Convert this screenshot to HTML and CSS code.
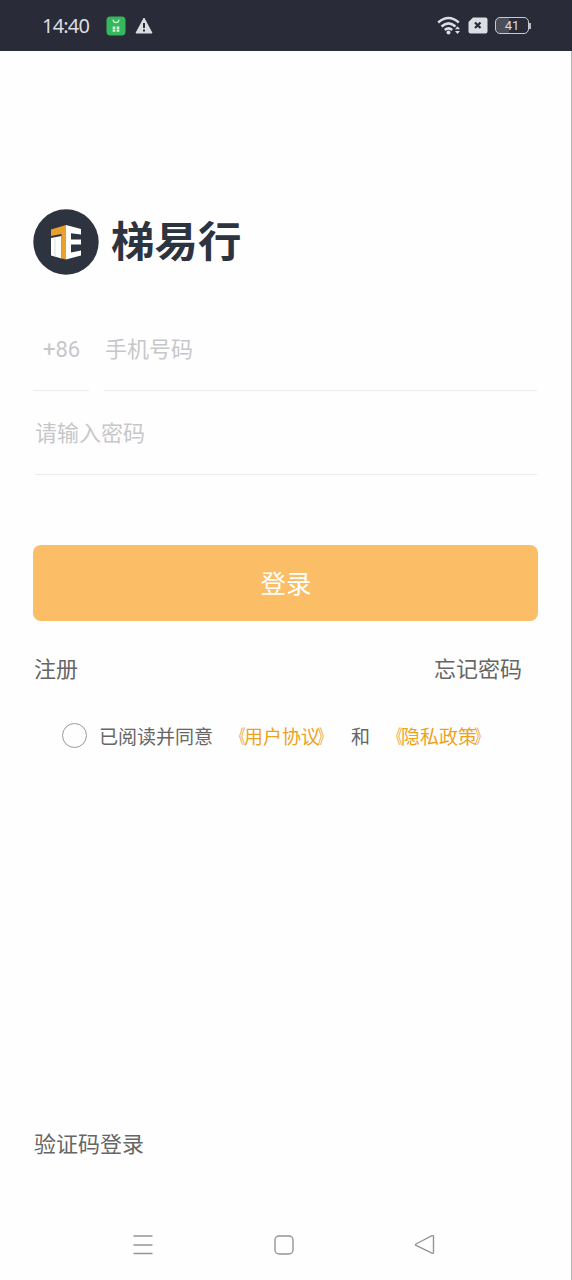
FILE: index.html
```html
<!DOCTYPE html>
<html lang="zh-CN">
<head>
<meta charset="utf-8">
<title>梯易行</title>
<link rel="stylesheet" href="styles.css">
</head>
<body>
<header class="status">
  <span class="clock">14:40</span>
  <svg class="app" width="20" height="20" viewBox="0 0 20 20"><rect x=".5" y=".5" width="19" height="19" rx="4" fill="#35b85c"/><path d="M7 3.700c.5 4 5.500 4 6 0" fill="none" stroke="#c9f3d4" stroke-width="1.300"/><path d="M8 10.500v5.500M12 10.500v5.500" fill="none" stroke="#d8f7df" stroke-width="2.600" stroke-dasharray="2.400 .5"/></svg>
  <svg class="warn" width="18" height="17" viewBox="0 0 18 17"><path d="M9 1 17 16H1Z" fill="#dcdcdf" stroke="#dcdcdf" stroke-linejoin="round"/><path d="M9 6v5M9 12.500v2" stroke="#2a2b38" stroke-width="2"/></svg>
  <div class="signals">
    <svg width="25" height="20" viewBox="0 0 25 20"><g fill="none" stroke="#dcdee3" stroke-width="2.500"><path d="M1.200 6.500Q11.500-2.500 21.800 6.500M4.500 10.500Q11.500 4.200 18.500 10.500M7.800 14Q11.500 10.700 15.200 14"/></g><circle cx="11.500" cy="16.500" r="2" fill="#dcdee3"/><path d="m18 13.200 2.500-3 2.500 3zM18 15h5l-2.500 3z" fill="#dcdee3"/></svg>
    <svg width="20" height="17" viewBox="0 0 20 17"><path d="M5 .5h12.500a2 2 0 0 1 2 2v12a2 2 0 0 1-2 2h-15a2 2 0 0 1-2-2V5Z" fill="#dcdee3"/><path d="m7 5.500 5.500 5.500m0-5.500L7 11" stroke="#2a2b38" stroke-width="2.200"/></svg>
    <span class="battery"><span class="level">41</span></span>
  </div>
</header>
<main class="page">
  <div class="brand">
    <svg width="66" height="66" viewBox="0 0 66 66"><circle cx="33" cy="33" r="32.700" fill="#2e3340"/><path d="M18 29 28.500 27V49.500L18 46.500Z" fill="#fff"/><path d="M22 28.500V47.500" stroke="#c5c7cd" stroke-width=".6"/><path d="M18 20.500 33 16V50.500L28.500 49.500V25L18 27Z" fill="#eaa02c"/><path d="M33 16 48 20V25.500L38 24.300V30.500H48V35.500H38V43.500L48 41.500V46.500L33 50.500Z" fill="#fff"/></svg>
    <h1 class="name">梯易行</h1>
  </div>
  <form class="form">
    <div class="phone"><span class="field code">+86</span><span class="field number">手机号码</span></div>
    <div class="field password">请输入密码</div>
    <button class="login" type="button">登录</button>
  </form>
  <div class="links"><span>注册</span><span>忘记密码</span></div>
  <div class="agree"><i class="radio"></i><span class="read">已阅读并同意</span><span class="policy"><span class="open">《</span>用户协议<span class="close">》</span></span><span class="and">和</span><span class="policy"><span class="open">《</span>隐私政策<span class="close">》</span></span></div>
  <div class="sms">验证码登录</div>
</main>
<nav class="nav">
  <svg width="22" height="22" viewBox="0 0 22 22"><path d="M1.500 2h19M1.500 11h19M1.500 19.500h19"/></svg>
  <svg width="22" height="22" viewBox="0 0 22 22"><rect x="2" y="2" width="18" height="18" rx="4"/></svg>
  <svg width="22" height="22" viewBox="0 0 22 22"><path d="M2 10 18 1.700Q19.500 1.200 19.500 2.700V18.300Q19.500 19.800 18 19.200L2 11.500Q1 10.800 2 10Z"/></svg>
</nav>
</body>
</html>
```
FILE: styles.css
```css
* { box-sizing: border-box; }
body {
  margin: 0;
  height: 1280px;
  display: flex;
  flex-direction: column;
  overflow: hidden;
  background: #fefefe;
  font-family: Roboto, "Noto Sans CJK SC", sans-serif;
  color: #666;
}
svg { display: block; flex: none; }
.status {
  height: 51px;
  flex: none;
  display: flex;
  align-items: center;
  padding: 0 41px 0 42px;
  background: #2a2b38;
  color: #dcdee3;
}
.clock { width: 64px; font-size: 20px; line-height: 24px; padding-top: 1px; letter-spacing: -.8px; font-family: "Noto Sans", sans-serif; }
.warn { margin-left: 9px; }
.signals { margin-left: auto; display: flex; align-items: center; gap: 7px; }
.signals svg:first-child { margin-right: -1px; }
.battery {
  display: flex;
  align-items: center;
  width: 36px;
}
.battery::after { content: ""; width: 2px; height: 6px; background: #b9bbc3; }
.level {
  width: 34px;
  height: 17px;
  border: 1.500px solid #c9cbd1;
  border-radius: 5px;
  background: linear-gradient(90deg, #4b4d58 41%, transparent 41%);
  font: 400 13px/16px Roboto, sans-serif;
  text-align: center;
}
.page { flex: 1; border-right: 1px solid #b5b5b5; padding: 158px 33px 0; }
.brand { display: flex; align-items: center; height: 66px; }
.name {
  margin: -4px 0 0 12px;
  font: 700 43.500px/60px "Noto Sans CJK SC", sans-serif;
  color: #2e3340;
  transform: scaleY(.96);
}
.form { display: block; }
.phone { display: flex; gap: 15px; margin-top: 32px; }
.field { display: block; font-size: 22px; line-height: 32px; color: #c7c7ca; border-bottom: 1px solid #ebebeb; }
.code, .number { height: 84px; padding-top: 27px; }
.code { width: 56px; padding-left: 10px; letter-spacing: 0; }
.number { flex: 1; padding-left: 1px; margin-right: 1px; }
.password { height: 84px; padding-top: 27px; margin: 0 1px 0 2px; }
.login {
  display: block;
  width: 505px;
  height: 76px;
  margin-top: 70px;
  padding: 0 0 3px 1px;
  border: 0;
  border-radius: 8px;
  background: #fbbd65;
  color: #fff;
  font: 400 25.500px/73px "Noto Sans CJK SC", sans-serif;
}
.links { display: flex; justify-content: space-between; margin-top: 32px; padding: 0 16px 0 1px; font-size: 22px; line-height: 34px; }
.agree { display: flex; align-items: center; height: 28px; margin: 35px 0 0 29px; font-size: 19px; line-height: 28px; white-space: nowrap; }
.read, .policy, .and { padding-top: 4px; }
.radio { width: 25px; height: 25px; border: 1px solid #999; border-radius: 50%; margin: 0 12px 2px 0; flex: none; }
.policy { color: #eda21e; margin-left: 12px; }
.open, .close { display: inline-block; }
.open { transform: translateX(1.500px) scaleX(.7); transform-origin: right; }
.close { transform: translateX(-2.500px) scaleX(.7); transform-origin: left; }
.and { margin-left: 12px; }
.sms { margin: 378px 0 0 1px; font-size: 22px; line-height: 34px; }
.nav {
  height: 70px;
  flex: none;
  display: flex;
  justify-content: space-between;
  padding: 24px 135px 0 132px;
  border-right: 1px solid #b5b5b5;
}
.nav svg { fill: none; stroke: #959595; stroke-width: 1.400; }
```
